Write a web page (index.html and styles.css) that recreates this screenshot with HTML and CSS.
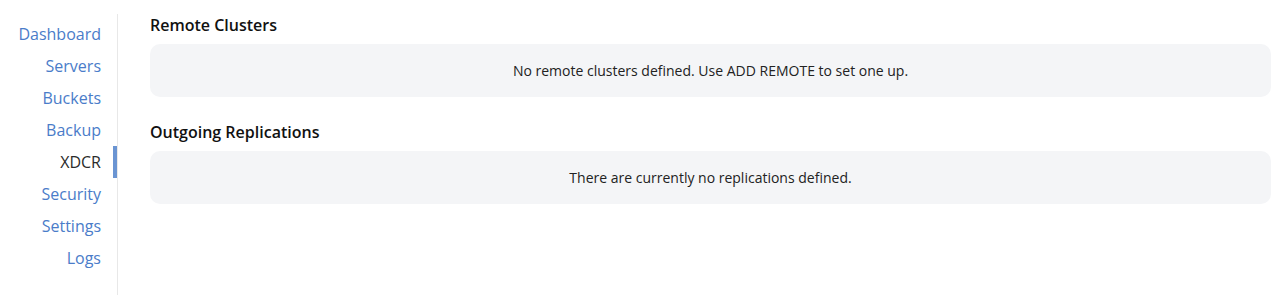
FILE: index.html
```html
<!DOCTYPE html>
<html>
<head>
<meta charset="utf-8">
<link rel="stylesheet" href="styles.css">
</head>
<body>
<div class="page">
  <nav class="sidebar">
    <a class="nav-item">Dashboard</a>
    <a class="nav-item">Servers</a>
    <a class="nav-item">Buckets</a>
    <a class="nav-item">Backup</a>
    <a class="nav-item active">XDCR</a>
    <a class="nav-item">Security</a>
    <a class="nav-item">Settings</a>
    <a class="nav-item">Logs</a>
  </nav>
  <main class="content">
    <section class="section">
      <h2 class="section-title">Remote Clusters</h2>
      <div class="empty-box">No remote clusters defined. Use ADD REMOTE to set one up.</div>
    </section>
    <section class="section">
      <h2 class="section-title">Outgoing Replications</h2>
      <div class="empty-box">There are currently no replications defined.</div>
    </section>
  </main>
</div>
</body>
</html>
```

FILE: styles.css
```css
html, body {
  margin: 0;
  padding: 0;
  background: #ffffff;
  font-family: "Open Sans", "Liberation Sans", sans-serif;
}

.page {
  display: flex;
  height: 295px;
}

.sidebar {
  width: 117px;
  margin-top: 14px;
  padding-top: 4px;
  border-right: 1px solid #e8e8e8;
  display: flex;
  flex-direction: column;
  align-items: stretch;
}

.nav-item {
  display: block;
  height: 32px;
  line-height: 32px;
  text-align: right;
  padding-right: 16px;
  font-size: 16px;
  color: #4a7cc9;
  cursor: pointer;
}

.nav-item.active {
  color: #2b2b2b;
  padding-right: 12px;
  border-right: 4px solid #6a94d2;
}

.content {
  flex: 1;
  padding: 14px 1px 0 32px;
  display: flex;
  flex-direction: column;
  gap: 24px;
}

.section-title {
  margin: 0 0 8px 0;
  font-size: 16px;
  font-weight: 600;
  line-height: 22px;
  color: #111111;
}

.empty-box {
  background: #f4f5f7;
  border-radius: 10px;
  height: 53px;
  display: flex;
  align-items: center;
  justify-content: center;
  font-size: 14px;
  color: #222222;
}
```
